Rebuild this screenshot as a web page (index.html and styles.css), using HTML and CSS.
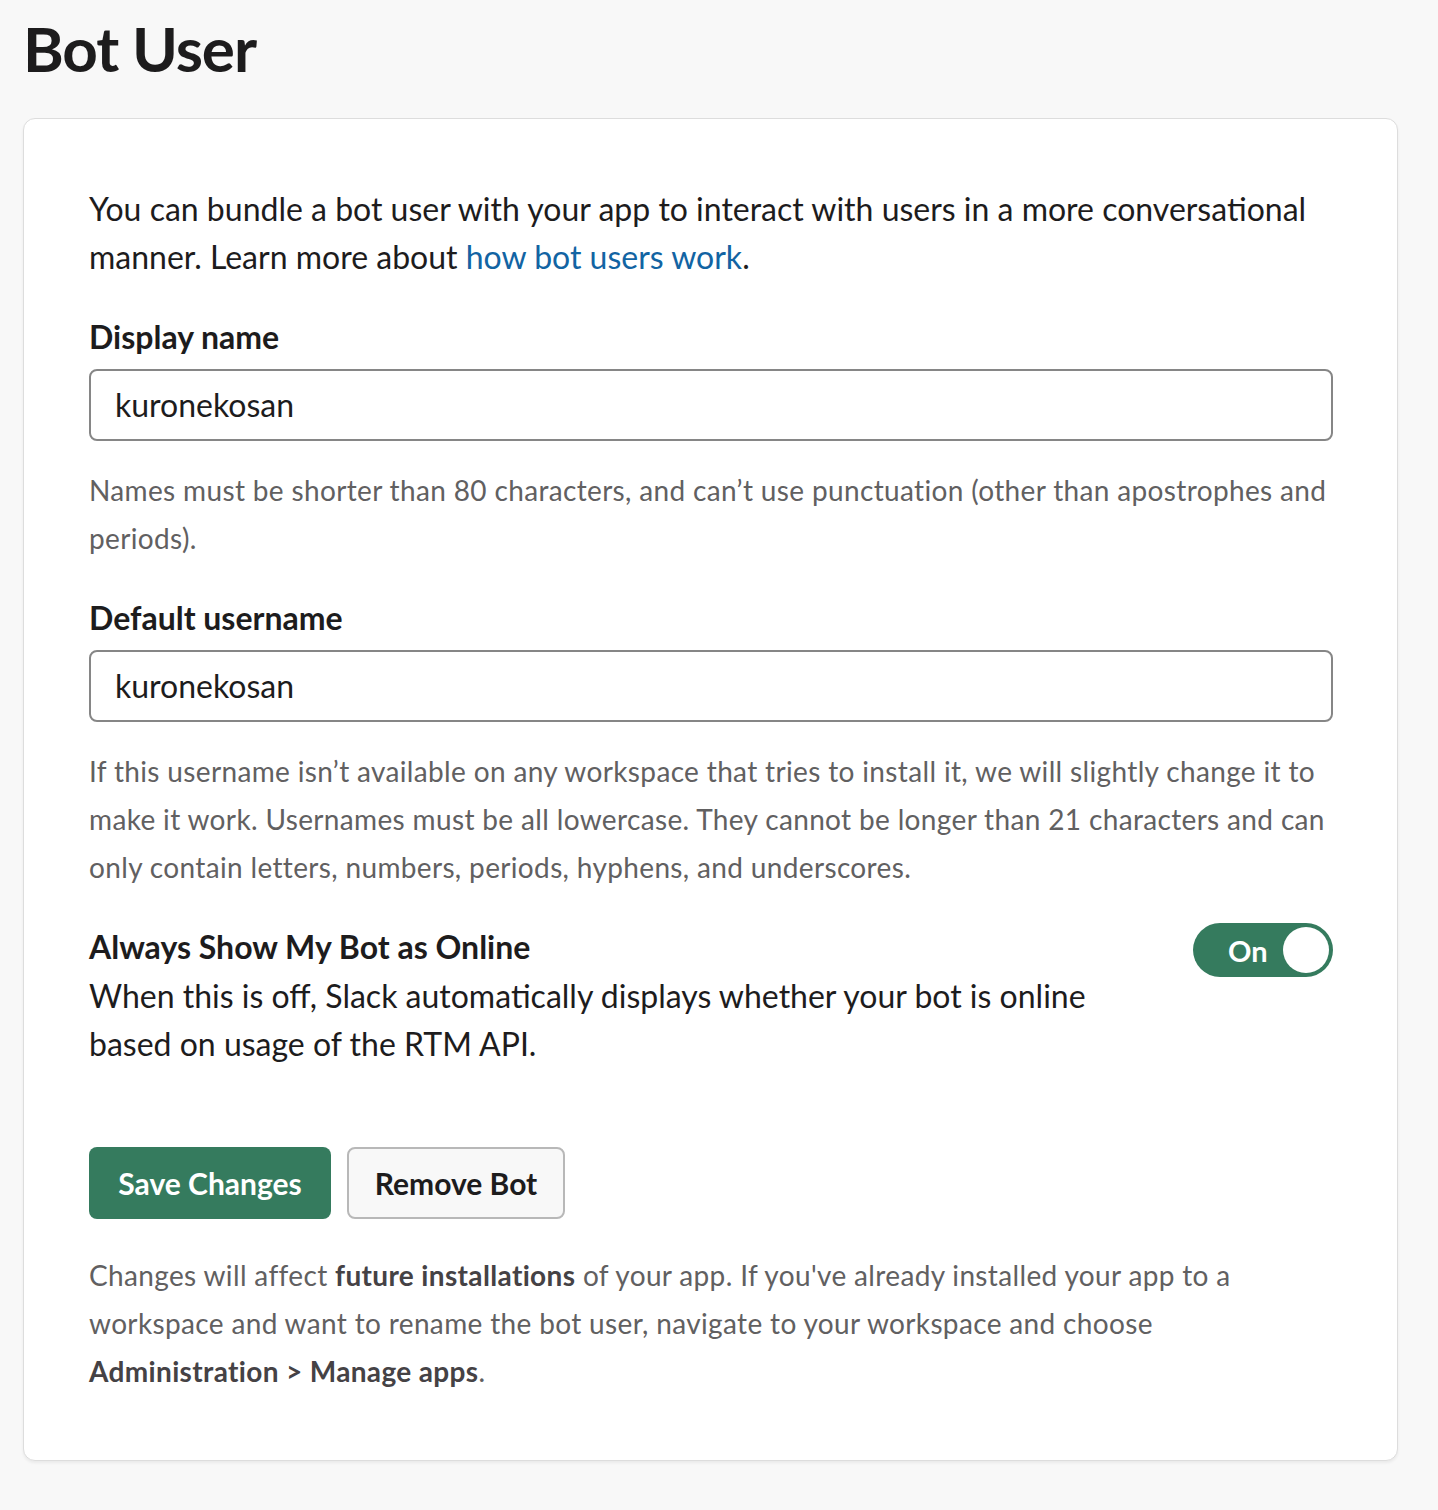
FILE: index.html
```html
<!DOCTYPE html>
<html lang="en">
<head>
<meta charset="utf-8">
<title>Bot User</title>
<link rel="stylesheet" href="styles.css">
</head>
<body>
<div class="page">
  <h1 class="title">Bot User</h1>
  <div class="card">
    <p class="intro">You can bundle a bot user with your app to interact with users in a more conversational manner. Learn more about <a class="link" href="#">how bot users work</a>.</p>

    <div class="field">
      <label class="label">Display name</label>
      <div class="input">kuronekosan</div>
      <p class="help">Names must be shorter than 80 characters, and can’t use punctuation (other than apostrophes and periods).</p>
    </div>

    <div class="field">
      <label class="label">Default username</label>
      <div class="input">kuronekosan</div>
      <p class="help">If this username isn’t available on any workspace that tries to install it, we will slightly change it to make it work. Usernames must be all lowercase. They cannot be longer than 21 characters and can only contain letters, numbers, periods, hyphens, and underscores.</p>
    </div>

    <div class="toggle-row">
      <div class="toggle-text">
        <div class="label">Always Show My Bot as Online</div>
        <p class="desc">When this is off, Slack automatically displays whether your bot is online based on usage of the RTM API.</p>
      </div>
      <div class="toggle"><span class="toggle-label">On</span><span class="knob"></span></div>
    </div>

    <div class="actions">
      <button class="btn btn-primary">Save Changes</button>
      <button class="btn btn-secondary">Remove Bot</button>
    </div>

    <p class="help footer">Changes will affect <strong>future installations</strong> of your app. If you've already installed your app to a workspace and want to rename the bot user, navigate to your workspace and choose <strong>Administration &gt; Manage apps</strong>.</p>
  </div>
</div>
</body>
</html>
```

FILE: styles.css
```css
html, body {
  margin: 0;
  padding: 0;
  background: #f8f8f8;
}
body {
  font-family: Lato, "Open Sans", sans-serif;
  color: #1d1c1d;
  height: 1510px;
}
.page {
  padding: 0 40px 0 23px;
}
.title {
  margin: 0;
  padding-top: 8px;
  height: 110px;
  font-size: 62px;
  line-height: 80px;
  font-weight: 700;
  letter-spacing: -1.1px;
  color: #1d1c1d;
}
.card {
  background: #fff;
  border: 1px solid #dddddd;
  border-radius: 12px;
  box-shadow: 0 2px 3px rgba(0, 0, 0, 0.06);
  padding: 66px 64px 65px 65px;
  width: 1375px;
  box-sizing: border-box;
}
.intro {
  margin: 0;
  font-size: 32px;
  line-height: 48px;
}
.link {
  color: #1264a3;
  text-decoration: none;
}
.field {
  margin-top: 32px;
}
.label {
  display: block;
  font-size: 32px;
  line-height: 48px;
  font-weight: 700;
}
.input {
  margin-top: 8px;
  height: 72px;
  box-sizing: border-box;
  border: 2px solid #868686;
  border-radius: 8px;
  padding: 0 24px;
  font-size: 32px;
  line-height: 68px;
  color: #1d1c1d;
}
.help {
  margin: 25px 0 0;
  font-size: 28px;
  letter-spacing: 0.35px;
  line-height: 48px;
  color: #616061;
}
.help strong {
  font-weight: 700;
  color: #454245;
}
.toggle-row {
  margin-top: 32px;
  display: flex;
  justify-content: space-between;
  align-items: flex-start;
}
.toggle-text {
  width: 1010px;
}
.desc {
  margin: 1px 0 0;
  font-size: 32px;
  line-height: 48px;
}
.toggle {
  flex: none;
  width: 140px;
  height: 54px;
  box-sizing: border-box;
  border-radius: 27px;
  background: #357b5e;
  display: flex;
  align-items: center;
  justify-content: space-between;
  padding: 0 4px 0 35px;
}
.toggle-label {
  color: #fff;
  font-size: 29px;
  font-weight: 700;
}
.knob {
  width: 46px;
  height: 46px;
  border-radius: 50%;
  background: #fff;
}
.actions {
  margin-top: 79px;
  display: flex;
  gap: 16px;
}
.btn {
  height: 72px;
  box-sizing: border-box;
  border-radius: 8px;
  font-family: Lato, "Open Sans", sans-serif;
  font-size: 30px;
  font-weight: 700;
  padding: 0;
  white-space: nowrap;
  cursor: pointer;
}
.btn-primary {
  background: #357b5e;
  color: #fff;
  border: none;
  width: 242px;
}
.btn-secondary {
  background: #f8f8f8;
  color: #1d1c1d;
  border: 2px solid #b8b8b8;
  width: 218px;
}
.footer {
  margin-top: 32px;
}
```
